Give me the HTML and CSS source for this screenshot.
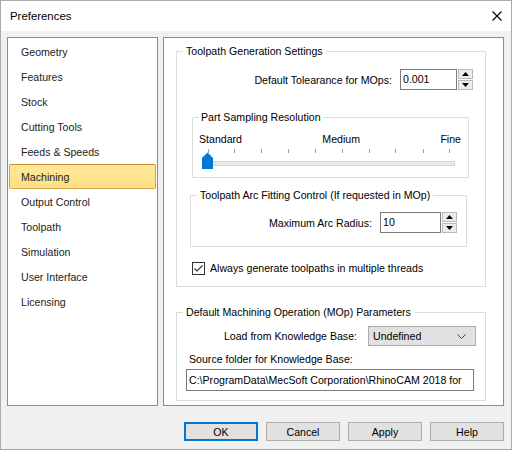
FILE: index.html
```html
<!DOCTYPE html>
<html>
<head>
<meta charset="utf-8">
<link rel="stylesheet" href="styles.css">
</head>
<body>
<div class="window">
  <div class="titlebar">
    <span class="title">Preferences</span>
    <svg class="close" width="10" height="10" viewBox="0 0 10 10"><path d="M0.5 0.5 L9.5 9.5 M9.5 0.5 L0.5 9.5" stroke="#000" stroke-width="1.1" fill="none"/></svg>
  </div>
  <div class="body">
    <div class="panels">
      <ul class="nav">
        <li>Geometry</li>
        <li>Features</li>
        <li>Stock</li>
        <li>Cutting Tools</li>
        <li>Feeds &amp; Speeds</li>
        <li class="selected">Machining</li>
        <li>Output Control</li>
        <li>Toolpath</li>
        <li>Simulation</li>
        <li>User Interface</li>
        <li>Licensing</li>
      </ul>
      <div class="page">
        <fieldset class="group g1">
          <legend>Toolpath Generation Settings</legend>
          <div class="row r-tol">
            <span>Default Tolearance for MOps:</span>
            <div class="edit e-tol">0.001</div>
            <div class="spin">
              <div class="spin-btn"><svg width="7" height="4" viewBox="0 0 7 4"><path d="M3.5 0 L7 4 L0 4 Z" fill="#000"/></svg></div>
              <div class="spin-btn"><svg width="7" height="4" viewBox="0 0 7 4"><path d="M0 0 L7 0 L3.5 4 Z" fill="#000"/></svg></div>
            </div>
          </div>
          <fieldset class="group g2">
            <legend>Part Sampling Resolution</legend>
            <div class="scale"><span>Standard</span><span>Medium</span><span>Fine</span></div>
            <svg class="slider" width="262" height="24" viewBox="0 0 262 24">
              <g fill="#9a9a9a">
                <rect x="9" y="2" width="1" height="4"/>
                <rect x="35" y="2" width="1" height="4"/>
                <rect x="62" y="2" width="1" height="4"/>
                <rect x="89" y="2" width="1" height="4"/>
                <rect x="116" y="2" width="1" height="4"/>
                <rect x="143" y="2" width="1" height="4"/>
                <rect x="170" y="2" width="1" height="4"/>
                <rect x="196" y="2" width="1" height="4"/>
                <rect x="224" y="2" width="1" height="4"/>
                <rect x="250" y="2" width="1" height="4"/>
              </g>
              <rect x="9.5" y="14.5" width="246" height="4" fill="#e7eaea" stroke="#d6d6d6"/>
              <path d="M3 11 L8.5 5.5 L14 11 L14 22 L3 22 Z" fill="#0078d7"/>
            </svg>
          </fieldset>
          <fieldset class="group g3">
            <legend>Toolpath Arc Fitting Control (If requested in MOp)</legend>
            <div class="row r-arc">
              <span>Maximum Arc Radius:</span>
              <div class="edit e-arc">10</div>
              <div class="spin">
                <div class="spin-btn"><svg width="7" height="4" viewBox="0 0 7 4"><path d="M3.5 0 L7 4 L0 4 Z" fill="#000"/></svg></div>
                <div class="spin-btn"><svg width="7" height="4" viewBox="0 0 7 4"><path d="M0 0 L7 0 L3.5 4 Z" fill="#000"/></svg></div>
              </div>
            </div>
          </fieldset>
          <div class="check">
            <span class="box"><svg width="11" height="11" viewBox="0 0 11 11"><path d="M1.5 5.5 L4 8 L9.5 2.5" stroke="#333" stroke-width="1.2" fill="none"/></svg></span>
            <span>Always generate toolpaths in multiple threads</span>
          </div>
        </fieldset>
        <fieldset class="group g4">
          <legend>Default Machining Operation (MOp) Parameters</legend>
          <div class="row r-kb">
            <span>Load from Knowledge Base:</span>
            <div class="combo"><span>Undefined</span><svg width="9" height="5" viewBox="0 0 9 5"><path d="M0.5 0.5 L4.5 4.5 L8.5 0.5" stroke="#444" fill="none"/></svg></div>
          </div>
          <div class="src-label">Source folder for Knowledge Base:</div>
          <div class="path">C:\ProgramData\MecSoft Corporation\RhinoCAM 2018 for</div>
        </fieldset>
      </div>
    </div>
    <div class="buttons">
      <button class="btn default">OK</button>
      <button class="btn">Cancel</button>
      <button class="btn">Apply</button>
      <button class="btn">Help</button>
    </div>
  </div>
</div>
</body>
</html>
```

FILE: styles.css
```css
html, body {
  margin: 0;
  padding: 0;
}
body {
  font-family: "Liberation Sans", Arial, sans-serif;
  font-size: 10.6px;
  color: #000;
}
.window {
  width: 512px;
  height: 450px;
  box-sizing: border-box;
  border: 1px solid #aaaaaa;
  background: #f0f0f0;
  display: flex;
  flex-direction: column;
}
.titlebar {
  height: 30px;
  flex: none;
  background: #fff;
  display: flex;
  align-items: center;
  justify-content: space-between;
  padding: 0 9px 0 9px;
}
.title {
  font-size: 11.4px;
}
.close {
  display: block;
}
.body {
  flex: 1;
  padding: 6px 7px 0 6px;
  display: flex;
  flex-direction: column;
}
.panels {
  display: flex;
  gap: 5px;
  height: 369px;
}
.nav {
  width: 151px;
  box-sizing: border-box;
  border: 1px solid #8c8c8c;
  background: #fff;
  margin: 0;
  padding: 1px 1px 0 1px;
  list-style: none;
}
.nav li {
  height: 25px;
  box-sizing: border-box;
  border: 1px solid transparent;
  border-radius: 2px;
  padding-left: 11px;
  line-height: 24px;
  color: #222;
}
.nav li.selected {
  background: linear-gradient(#ffe897, #fde085);
  border-color: #d9a443;
  border-top-color: #c98a2c;
}
.page {
  width: 341px;
  box-sizing: border-box;
  border: 1px solid #8c8c8c;
  background: #fff;
}
.group {
  border: 1px solid #dcdcdc;
  margin: 0;
  padding: 0;
  min-width: 0;
  box-sizing: border-box;
}
.group legend {
  padding: 0 3px;
  margin-left: 6px;
  line-height: 13px;
}
.g1 {
  margin: 7px 0 0 12px;
  width: 310px;
  padding: 0 0 11px 0;
}
.row {
  display: flex;
  justify-content: flex-end;
  align-items: center;
}
.r-tol {
  margin: 11px 12px 0 0;
  height: 21px;
}
.edit {
  height: 21px;
  box-sizing: border-box;
  border: 1px solid #7a7a7a;
  background: #fff;
  padding-left: 2px;
  line-height: 19px;
  margin-left: 8px;
}
.e-tol {
  width: 57px;
}
.e-arc {
  width: 61px;
}
.spin {
  margin-left: 1px;
  width: 15px;
  height: 21px;
  display: flex;
  flex-direction: column;
  gap: 1px;
}
.spin-btn {
  height: 10px;
  box-sizing: border-box;
  border: 1px solid #b9b9b9;
  background: #ececec;
  display: flex;
  align-items: center;
  justify-content: center;
}
.spin-btn svg {
  display: block;
}
.g2 {
  margin: 21px 0 0 15px;
  width: 277px;
  padding: 0 7px 6px 6px;
}
.g2 legend {
  margin-left: 0;
  padding: 0 2px;
}
.scale {
  display: flex;
  justify-content: space-between;
  margin-top: 9px;
  line-height: 13px;
}
.slider {
  display: block;
  margin-top: 1px;
}
.g3 {
  margin: 11px 0 0 13px;
  width: 277px;
  padding: 0 0 13px 0;
}
.r-arc {
  margin: 10px 9px 0 0;
  height: 21px;
}
.check {
  display: flex;
  align-items: center;
  gap: 5px;
  margin: 15px 0 0 15px;
  height: 13px;
  line-height: 13px;
}
.box {
  width: 13px;
  height: 13px;
  box-sizing: border-box;
  border: 1px solid #333;
  background: #fff;
  display: block;
}
.box svg {
  display: block;
}
.g4 {
  margin: 19px 0 0 12px;
  width: 310px;
  padding: 0 0 9px 0;
}
.r-kb {
  margin: 7px 9px 0 0;
  height: 20px;
}
.combo {
  width: 108px;
  height: 20px;
  box-sizing: border-box;
  margin-left: 11px;
  border: 1px solid #adadad;
  background: #e1e1e1;
  display: flex;
  align-items: center;
  justify-content: space-between;
  padding: 0 9px 0 4px;
}
.combo svg {
  display: block;
}
.src-label {
  margin: 7px 0 0 12px;
  line-height: 13px;
}
.path {
  margin: 3px 0 0 9px;
  width: 288px;
  height: 22px;
  box-sizing: border-box;
  border: 1px solid #7a7a7a;
  padding-left: 2px;
  line-height: 20px;
  overflow: hidden;
  white-space: nowrap;
}
.buttons {
  display: flex;
  justify-content: flex-end;
  gap: 8px;
  margin-top: 16px;
}
.btn {
  width: 74px;
  height: 19px;
  box-sizing: border-box;
  border: 1px solid #adadad;
  background: #e1e1e1;
  font-family: "Liberation Sans", Arial, sans-serif;
  font-size: 10.6px;
  color: #000;
  padding: 0;
  margin: 0;
}
.btn.default {
  border: 2px solid #0078d7;
}
```
